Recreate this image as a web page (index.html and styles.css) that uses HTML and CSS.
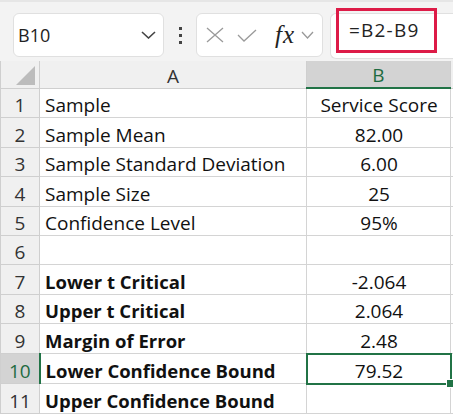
FILE: index.html
```html
<!DOCTYPE html>
<html lang="en">
<head>
    <meta charset="UTF-8">
    <title>Confidence Bound</title>
    <link rel="stylesheet" href="styles.css">
</head>
<body>

    <div class="toolbar">
        <div class="name-box">
            <span>B10</span>
            <svg class="chev" width="15" height="8" viewBox="0 0 15 8"><path d="M1 1 L7.5 7 L14 1" fill="none" stroke="#444" stroke-width="1.6"/></svg>
        </div>
        <div class="dots"><i></i><i></i><i></i></div>
        <div class="fx-box">
            <svg width="18" height="16" viewBox="0 0 18 16"><path d="M1 1 L17 15 M17 1 L1 15" stroke="#9a9a9a" stroke-width="1.3" fill="none"/></svg>
            <svg width="20" height="13" viewBox="0 0 20 13"><path d="M1 6 L7 12 L19 1" stroke="#9a9a9a" stroke-width="1.3" fill="none"/></svg>
            <span class="fx">fx</span>
            <svg width="13" height="8" viewBox="0 0 13 8"><path d="M1 1 L6.5 7 L12 1" fill="none" stroke="#999" stroke-width="1.3"/></svg>
        </div>
        <div class="formula">
            <span class="formula-text">=B2-B9</span>
        </div>
    </div>

    <table class="sheet">
        <colgroup>
            <col class="c-row">
            <col class="c-a">
            <col class="c-b">
            <col>
        </colgroup>
        <tr class="head">
            <th class="corner"><span class="tri"></span></th>
            <th>A</th>
            <th class="sel">B</th>
            <th></th>
        </tr>
        <tr><th>1</th><td>Sample</td><td class="num">Service Score</td><td></td></tr>
        <tr><th>2</th><td>Sample Mean</td><td class="num">82.00</td><td></td></tr>
        <tr><th>3</th><td>Sample Standard Deviation</td><td class="num">6.00</td><td></td></tr>
        <tr><th>4</th><td>Sample Size</td><td class="num">25</td><td></td></tr>
        <tr><th>5</th><td>Confidence Level</td><td class="num">95%</td><td></td></tr>
        <tr><th>6</th><td></td><td></td><td></td></tr>
        <tr><th>7</th><td class="b">Lower t Critical</td><td class="num">-2.064</td><td></td></tr>
        <tr><th>8</th><td class="b">Upper t Critical</td><td class="num">2.064</td><td></td></tr>
        <tr><th>9</th><td class="b">Margin of Error</td><td class="num">2.48</td><td></td></tr>
        <tr><th class="sel-row">10</th><td class="b">Lower Confidence Bound</td><td class="num active">79.52<span class="handle"></span></td><td></td></tr>
        <tr><th>11</th><td class="b">Upper Confidence Bound</td><td class="num"></td><td></td></tr>
    </table>

</body>
</html>
```

FILE: styles.css
```css
body {
    margin: 0;
    background: #fff;
    font-family: "Open Sans", "Noto Sans", sans-serif;
    overflow: hidden;
}
.toolbar {
    height: 61px;
    box-sizing: border-box;
    background: #f3f3f3;
    border-top: 2px solid #e6e6e6;
    display: flex;
    align-items: flex-start;
    padding-top: 11px;
}
.name-box {
    margin-left: 13px;
    width: 151px;
    height: 44px;
    box-sizing: border-box;
    background: #fff;
    border: 1px solid #e0e0e0;
    border-radius: 6px;
    display: flex;
    align-items: center;
    justify-content: space-between;
    padding: 0 7px 0 4px;
    font-size: 18px;
    color: #222;
}
.dots {
    width: 32px;
    height: 44px;
    display: flex;
    flex-direction: column;
    align-items: center;
    justify-content: center;
    gap: 4px;
}
.dots i {
    width: 3px;
    height: 3px;
    background: #444;
}
.fx-box {
    width: 127px;
    height: 44px;
    box-sizing: border-box;
    background: #fff;
    border: 1px solid #e0e0e0;
    border-radius: 6px;
    display: flex;
    align-items: center;
    padding: 0 5px 0 9px;
    gap: 13px;
}
.fx-box .fx {
    font-family: "Liberation Serif", serif;
    font-style: italic;
    font-size: 25px;
    color: #222;
    margin-left: 5px;
    margin-right: -7px;
    letter-spacing: 1px;
}
.formula {
    flex: 1;
    height: 44px;
    margin-left: 7px;
    background: #fff;
    border: 1px solid #e0e0e0;
    border-right: none;
    border-radius: 6px 0 0 6px;
    position: relative;
}
.formula-text {
    position: absolute;
    left: 5px;
    top: -6px;
    width: 101px;
    height: 45px;
    box-sizing: border-box;
    border: 3px solid #dd1b47;
    padding-left: 10px;
    line-height: 38px;
    font-size: 19px;
    color: #222;
    letter-spacing: 1.2px;
}
.sheet {
    border-collapse: collapse;
    table-layout: fixed;
    width: 460px;
    font-size: 19px;
    color: #111;
}
.c-row { width: 39px; }
.c-a { width: 267px; }
.c-b { width: 144px; }
.sheet th, .sheet td {
    height: 28.4px;
    padding: 0 4px;
    border: 1px solid #d4d4d4;
    white-space: nowrap;
    overflow: hidden;
    vertical-align: bottom;
    line-height: 24px;
}
.sheet th {
    background: #f0f0f0;
    font-weight: normal;
    color: #333;
    border-color: #cfcfcf;
    text-align: center;
}
.sheet .head th {
    height: 26px;
    border-top: none;
}
.sheet td {
    padding-left: 5px;
}
.corner {
    position: relative;
}
.tri {
    position: absolute;
    right: 4px;
    bottom: 3px;
    width: 0;
    height: 0;
    border-left: 19px solid transparent;
    border-bottom: 19px solid #bcbcbc;
}
.sheet th.sel {
    background: #d3d3d3;
    color: #1e6b41;
    border-bottom: 2px solid #217346;
}
.sheet th.sel-row {
    background: #d3d3d3;
    color: #1e6b41;
    border-right: 2px solid #217346;
}
.num {
    text-align: center;
}
.b {
    font-weight: bold;
    font-size: 18.5px;
}
.sheet td.active {
    border: 2px solid #217346;
    position: relative;
    overflow: visible;
}
.handle {
    position: absolute;
    right: -5px;
    bottom: -5px;
    width: 7px;
    height: 7px;
    background: #217346;
    border: 1px solid #fff;
}
```
